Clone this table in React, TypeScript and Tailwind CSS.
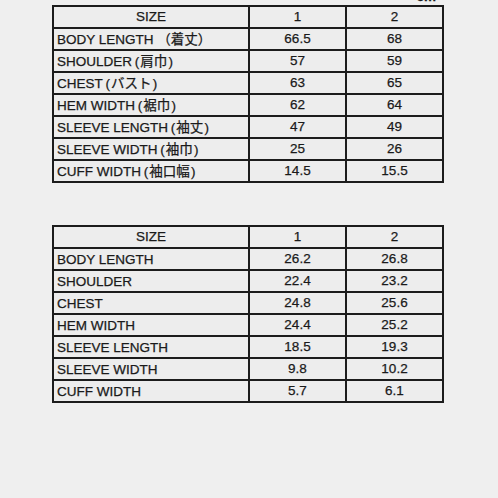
import React from 'react';

interface SizeRow {
  label: string;
  s1: string;
  s2: string;
}

const jpRows: SizeRow[] = [
  { label: 'BODY LENGTH （着丈）', s1: '66.5', s2: '68' },
  { label: 'SHOULDER\u2009(\u200a肩巾\u200a)', s1: '57', s2: '59' },
  { label: 'CHEST\u2009(\u200aバスト\u200a)', s1: '63', s2: '65' },
  { label: 'HEM WIDTH\u2009(\u200a裾巾\u200a)', s1: '62', s2: '64' },
  { label: 'SLEEVE LENGTH\u2009(\u200a袖丈\u200a)', s1: '47', s2: '49' },
  { label: 'SLEEVE WIDTH\u2009(\u200a袖巾\u200a)', s1: '25', s2: '26' },
  { label: 'CUFF WIDTH\u2009(\u200a袖口幅\u200a)', s1: '14.5', s2: '15.5' },
];

const inchRows: SizeRow[] = [
  { label: 'BODY LENGTH', s1: '26.2', s2: '26.8' },
  { label: 'SHOULDER', s1: '22.4', s2: '23.2' },
  { label: 'CHEST', s1: '24.8', s2: '25.6' },
  { label: 'HEM WIDTH', s1: '24.4', s2: '25.2' },
  { label: 'SLEEVE LENGTH', s1: '18.5', s2: '19.3' },
  { label: 'SLEEVE WIDTH', s1: '9.8', s2: '10.2' },
  { label: 'CUFF WIDTH', s1: '5.7', s2: '6.1' },
];

function SizeTable({ rows }: { rows: SizeRow[] }) {
  const cell = 'border-2 border-[#1c1c1c] h-[22px] p-0 leading-[18px]';
  return (
    <table className="border-collapse table-fixed w-[390px] bg-[#ededed]">
      <colgroup>
        <col className="w-[196px]" />
        <col className="w-[97px]" />
        <col className="w-[97px]" />
      </colgroup>
      <tbody>
        <tr>
          <td className={`${cell} text-center`}>SIZE</td>
          <td className={`${cell} text-center`}>1</td>
          <td className={`${cell} text-center`}>2</td>
        </tr>
        {rows.map((row) => (
          <tr key={row.label}>
            <td className={`${cell} pl-[3px] pt-[2px] whitespace-nowrap`}>{row.label}</td>
            <td className={`${cell} text-center`}>{row.s1}</td>
            <td className={`${cell} text-center`}>{row.s2}</td>
          </tr>
        ))}
      </tbody>
    </table>
  );
}

export default function App() {
  return (
    <div
      className="w-[498px] h-[498px] bg-[#efefef] text-[#1a1a1a] text-[13.5px] overflow-hidden [-webkit-text-stroke:0.25px_#1a1a1a]"
      style={{ fontFamily: '"Liberation Sans", "Noto Sans CJK JP", sans-serif' }}
    >
      <div className="h-[5px] flex justify-end pr-[62px]">
        <span className="-mt-[10px] font-bold leading-[14px]">cm</span>
      </div>
      <div className="pl-[52px]">
        <SizeTable rows={jpRows} />
      </div>
      <div className="pl-[52px] mt-[42px]">
        <SizeTable rows={inchRows} />
      </div>
    </div>
  );
}
